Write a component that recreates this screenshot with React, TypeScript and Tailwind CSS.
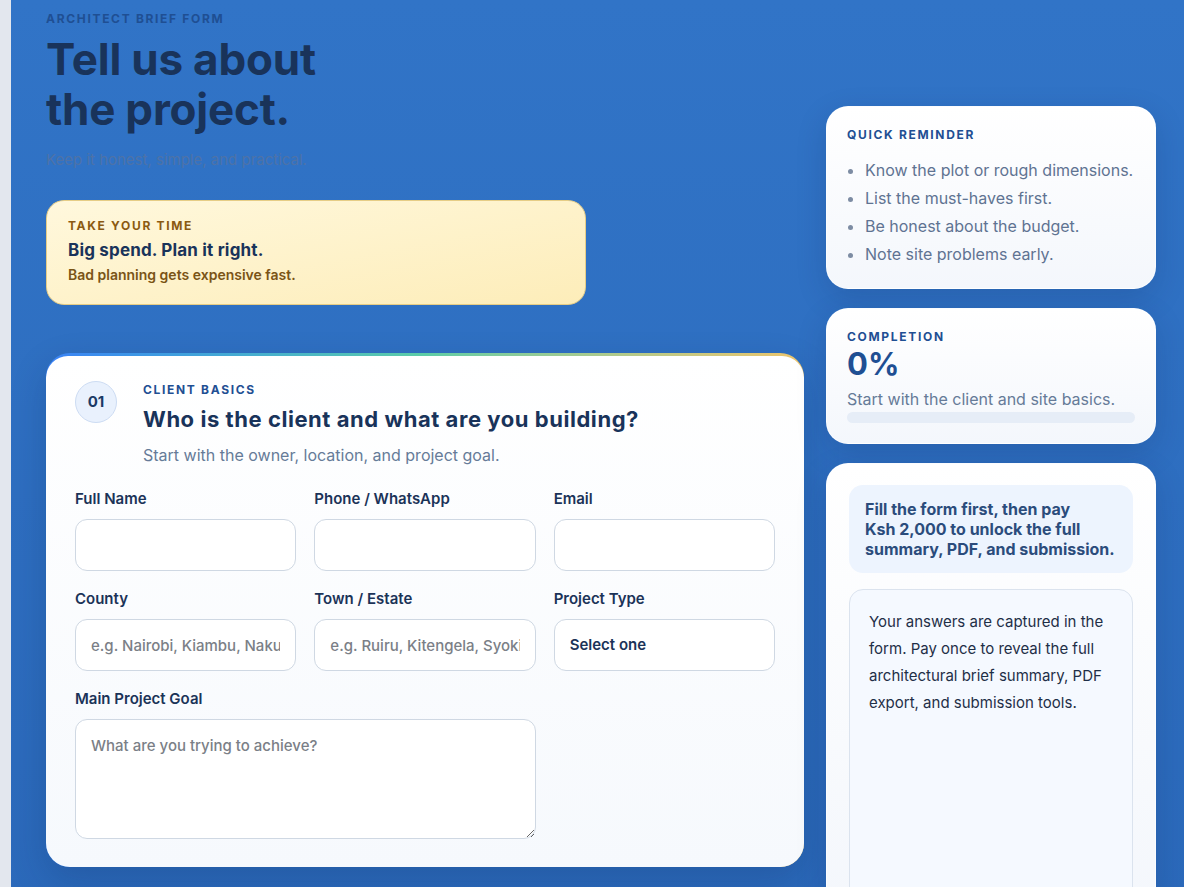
import type { ReactNode } from 'react'

const display = "font-['Inter','Liberation_Sans',sans-serif]"

const reminders = [
  'Know the plot or rough dimensions.',
  'List the must-haves first.',
  'Be honest about the budget.',
  'Note site problems early.',
]

function Eyebrow({ children, className = '' }: { children: ReactNode; className?: string }) {
  return (
    <p className={`text-[12px] font-bold uppercase tracking-[0.14em] leading-4 ${className}`}>
      {children}
    </p>
  )
}

function Field({
  label,
  placeholder,
  select,
}: {
  label: string
  placeholder?: string
  select?: boolean
}) {
  return (
    <label className="flex flex-col gap-[10px]">
      <span className="text-[15px] font-semibold leading-5 text-[#1b3358]">{label}</span>
      {select ? (
        <div className="flex h-[52px] items-center rounded-xl border border-[#cfd8e3] bg-white px-[15px] text-[15px] font-semibold text-[#1b3358]">
          Select one
        </div>
      ) : (
        <input
          placeholder={placeholder}
          className="h-[52px] w-full rounded-xl border border-[#cfd8e3] bg-white px-[15px] text-[15px] font-medium text-[#1b3358] outline-none placeholder:text-[#7b7f87]"
        />
      )}
    </label>
  )
}

function SideCard({ children, className = '' }: { children: ReactNode; className?: string }) {
  return (
    <div
      className={`rounded-[22px] border border-white/60 bg-gradient-to-b from-white to-[#f4f7fc] shadow-[0_10px_30px_rgba(15,40,90,0.18)] ${className}`}
    >
      {children}
    </div>
  )
}

export default function App() {
  return (
    <div className="flex min-h-[887px] font-['Inter','Liberation_Sans',sans-serif]">
      <div className="w-[11px] shrink-0 bg-[#e3e7ee]" />
      <main className="flex flex-1 gap-[22px] bg-gradient-to-b from-[#3174c7] to-[#2b69ba] pl-[35px] pr-[28px] pt-[11px]">
        {/* form column */}
        <section className="flex w-[758px] shrink-0 flex-col">
          <Eyebrow className="text-[#1f4f93]">Architect brief form</Eyebrow>
          <h1 className={`${display} mt-[7px] text-[44px] font-bold leading-[50px] tracking-[-0.005em] text-[#19335a]`}>
            Tell us about
            <br />
            the project.
          </h1>
          <p className="mt-[16px] text-[15px] leading-5 text-[#4d72a8]">
            Keep it honest, simple, and practical.
          </p>

          <div className="mt-[30px] w-[540px] rounded-[18px] border border-[#e6cd86] bg-gradient-to-br from-[#fff8dd] to-[#fdedb9] px-[21px] pb-[19px] pt-[17px]">
            <Eyebrow className="text-[#8b5a12]">Take your time</Eyebrow>
            <p className={`${display} mt-[4px] text-[17px] font-bold leading-6 tracking-[0.01em] text-[#19335a]`}>
              Big spend. Plan it right.
            </p>
            <p className="mt-[3px] text-[14px] font-semibold leading-5 text-[#7a5416]">
              Bad planning gets expensive fast.
            </p>
          </div>

          {/* client basics */}
          <div className="mt-[48px] overflow-hidden rounded-[24px] bg-gradient-to-r from-[#3b82f6] via-[#5ccca6] to-[#ecc46b] pt-[3px] shadow-[0_14px_36px_rgba(10,35,80,0.2)]">
            <div className="rounded-t-[22px] bg-gradient-to-b from-white to-[#f6f9fd] px-[29px] pb-[28px] pt-[25px]">
              <div className="flex gap-[26px]">
                <div className="flex h-[42px] w-[42px] shrink-0 items-center justify-center rounded-full border border-[#cddcf3] bg-[#e9f1fd] text-[15px] font-bold text-[#1b3a66]">
                  01
                </div>
                <div className="pt-[1px]">
                  <Eyebrow className="text-[#1f4f93]">Client basics</Eyebrow>
                  <h2 className={`${display} mt-[7px] text-[22px] font-bold leading-7 tracking-[0.025em] text-[#19335a]`}>
                    Who is the client and what are you building?
                  </h2>
                  <p className="mt-[10px] text-[16px] leading-6 text-[#667b98]">
                    Start with the owner, location, and project goal.
                  </p>
                </div>
              </div>

              <div className="mt-[22px] grid grid-cols-3 gap-x-[18px] gap-y-[18px]">
                <Field label="Full Name" />
                <Field label="Phone / WhatsApp" />
                <Field label="Email" />
                <Field label="County" placeholder="e.g. Nairobi, Kiambu, Nakuru" />
                <Field label="Town / Estate" placeholder="e.g. Ruiru, Kitengela, Syokimau" />
                <Field label="Project Type" select />
                <label className="col-span-2 flex flex-col gap-[10px]">
                  <span className="text-[15px] font-semibold leading-5 text-[#1b3358]">Main Project Goal</span>
                  <textarea
                    placeholder="What are you trying to achieve?"
                    className="h-[120px] w-full rounded-xl border border-[#cfd8e3] bg-white px-[15px] py-[16px] text-[15px] font-medium leading-5 text-[#1b3358] outline-none placeholder:text-[#7b7f87]"
                  />
                </label>
              </div>
            </div>
          </div>
        </section>

        {/* sidebar */}
        <aside className="flex w-[330px] shrink-0 flex-col gap-[19px] pt-[95px]">
          <SideCard className="px-[20px] pb-[24px] pt-[20px]">
            <Eyebrow className="text-[#1f4f93]">Quick reminder</Eyebrow>
            <ul className="mt-[17px] space-y-[8px] pl-[18px] text-[16px] leading-5 text-[#5f7392]">
              {reminders.map(r => (
                <li key={r} className="list-disc whitespace-nowrap marker:text-[#7d8ca3]">
                  {r}
                </li>
              ))}
            </ul>
          </SideCard>

          <SideCard className="px-[20px] pb-[20px] pt-[20px]">
            <Eyebrow className="text-[#1f4f93]">Completion</Eyebrow>
            <p className={`${display} mt-[1px] text-[31px] font-bold leading-9 text-[#1f4f93]`}>0%</p>
            <p className="mt-[7px] text-[16px] leading-5 text-[#667b98]">
              Start with the client and site basics.
            </p>
            <div className="mt-[3px] h-[11px] rounded-full bg-[#e6edf7]" />
          </SideCard>

          <SideCard className="flex-1 px-[22px] pt-[21px]">
            <div className="rounded-[14px] bg-[#edf4fe] px-[16px] py-[14px] text-[16px] font-bold leading-5 text-[#2b4c7c]">
              Fill the form first, then pay
              <br />
              Ksh 2,000 to unlock the full
              <br />
              summary, PDF, and submission.
            </div>
            <div className="mt-[16px] h-[320px] rounded-[14px] border border-[#dbe3ee] bg-[#f5f9ff] px-[19px] pt-[18px] text-[15px] leading-[27px] text-[#1f2f47]">
              Your answers are captured in the form. Pay once to reveal the full architectural brief
              summary, PDF export, and submission tools.
            </div>
          </SideCard>
        </aside>
      </main>
    </div>
  )
}
